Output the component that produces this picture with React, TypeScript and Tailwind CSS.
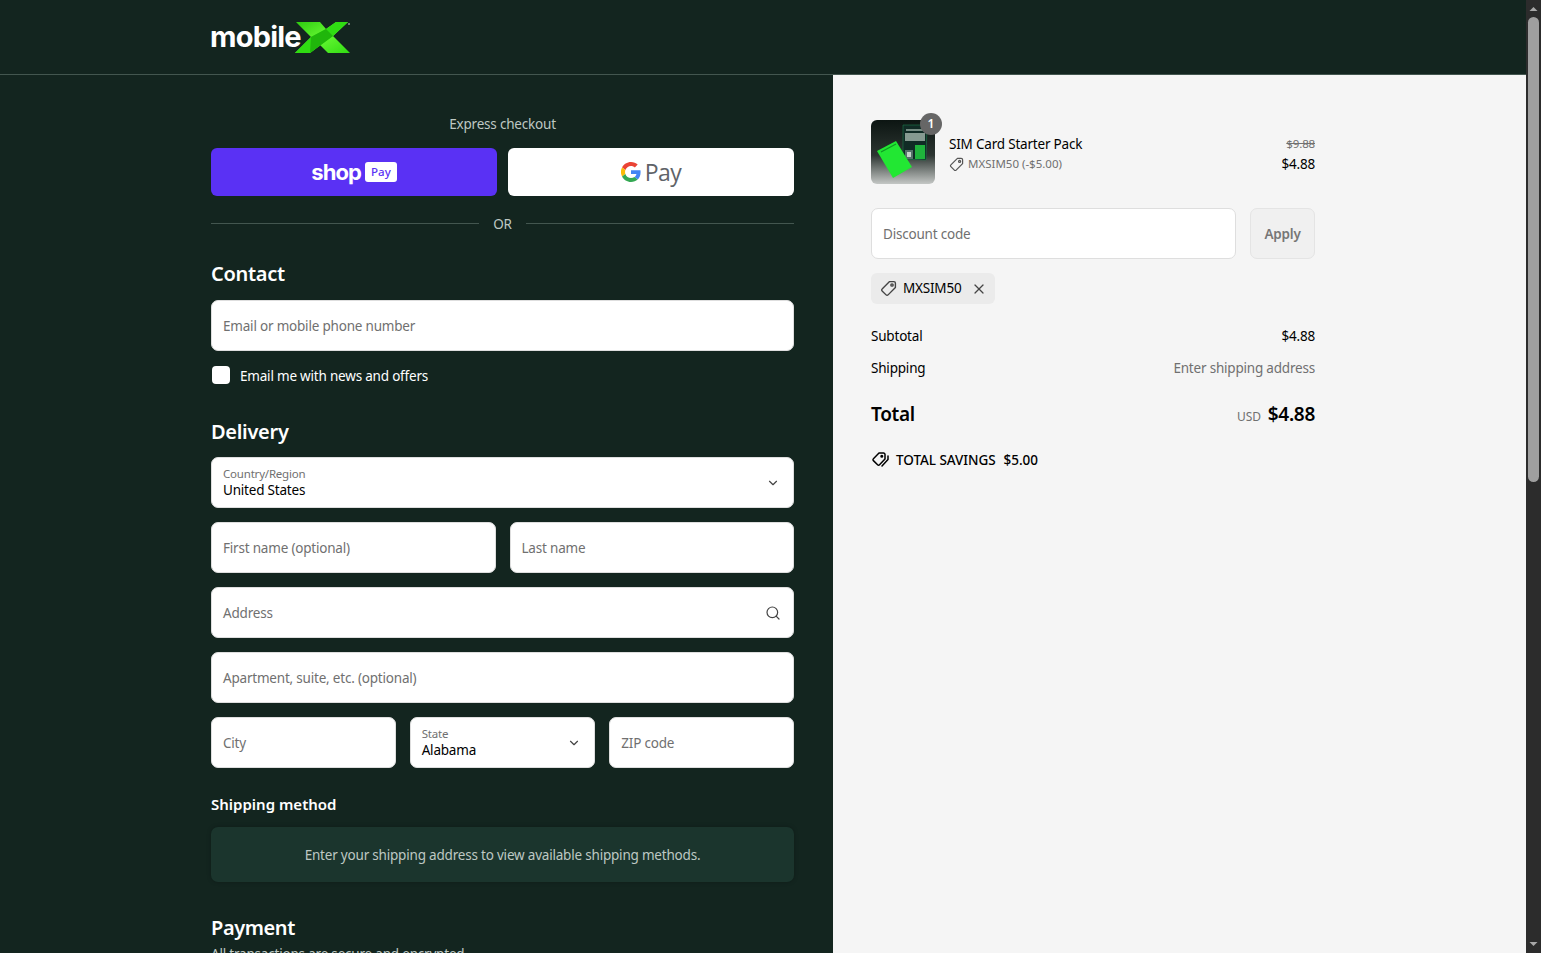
import React from 'react';
import { ChevronDown, Search, X } from 'lucide-react';

const font = "font-['Noto_Sans','Open_Sans',sans-serif]";
const body = 'text-[13.5px] tracking-[-0.2px]';

const Logo = () => (
  <div className="flex items-center h-[34px] -ml-[1px]">
    <span className="font-['Inter',sans-serif] font-bold text-[29px] leading-none tracking-[-0.8px] text-white">mobile</span>
    <svg width="57" height="33" viewBox="0 0 57 33" className="-ml-[7px] shrink-0 mt-[2px]">
      <defs>
        <linearGradient id="xg" x1="0" y1="0" x2="1" y2="1">
          <stop offset="0" stopColor="#2ccb0e" />
          <stop offset="0.5" stopColor="#66f733" />
          <stop offset="1" stopColor="#30dc12" />
        </linearGradient>
      </defs>
      <path d="M2 1h24l6 7 10-7h12L39 15l17 17H34l-8-8-10 8H1l16-16z" fill="url(#xg)" />
      <path d="M42 1h12L39 15 16 32H1l16-16 15-8z" fill="#2fdc12" />
      <path d="M17 16l15-8 7 7-23 17z" fill="#20b60b" />
      <circle cx="55" cy="3" r="1" fill="#8a9a90" />
    </svg>
  </div>
);

const Tag = ({ size = 16, className = '' }: { size?: number; className?: string }) => (
  <svg width={size} height={size} viewBox="0 0 16 16" fill="none" stroke="currentColor" strokeWidth="1.3" strokeLinejoin="round" className={className}>
    <path d="M9 1.500h4a1.500 1.500 0 0 1 1.500 1.500v4L7.600 14a1.300 1.300 0 0 1-1.900 0L2 10.300a1.300 1.300 0 0 1 0-1.900z" />
    <circle cx="11.300" cy="4.700" r="1.100" />
  </svg>
);

const Tags = () => (
  <svg width="18" height="18" viewBox="0 0 18 18" fill="none" stroke="currentColor" strokeWidth="1.500" strokeLinejoin="round" strokeLinecap="round">
    <path d="M8 2h4.500A1.500 1.500 0 0 1 14 3.500V8l-5.500 5.800a1.300 1.300 0 0 1-1.900 0L2.400 9.600a1.300 1.300 0 0 1 0-1.900z" />
    <circle cx="10.800" cy="5.300" r="0.800" />
    <path d="M17 5v3.500l-6 6.500" />
  </svg>
);

const Field = ({ label, className = '', icon }: { label: string; className?: string; icon?: React.ReactNode }) => (
  <div className={`h-[51px] bg-white rounded-[7px] border border-[#dedede] flex items-center justify-between pl-[11px] pr-[12px] min-w-0 ${className}`}>
    <span className={`${body} pt-[2px] text-[#707070] whitespace-nowrap`}>{label}</span>
    {icon}
  </div>
);

const SelectField = ({ label, value, className = '' }: { label: string; value: string; className?: string }) => (
  <div className={`h-[51px] bg-white rounded-[7px] border border-[#dedede] flex items-center justify-between pl-[11px] pr-[13px] min-w-0 ${className}`}>
    <div className="flex flex-col pb-[2px]">
      <span className="text-[11.5px] tracking-[-0.2px] leading-[16px] text-[#707070]">{label}</span>
      <span className={`${body} leading-[16px] text-black`}>{value}</span>
    </div>
    <ChevronDown size={14} strokeWidth={2} className="text-[#444]" />
  </div>
);

const Thumb = () => (
  <svg width="64" height="64" viewBox="0 0 64 64" className="rounded-[6px] block">
    <defs>
      <linearGradient id="thumbBg" x1="0" y1="0" x2="0" y2="1">
        <stop offset="0" stopColor="#0c1512" />
        <stop offset="0.55" stopColor="#2c3531" />
        <stop offset="1" stopColor="#c4c7c5" />
      </linearGradient>
    </defs>
    <rect width="64" height="64" fill="url(#thumbBg)" />
    <path d="M32 5h24l-1 35-23-1z" fill="#102b25" stroke="#1d7a4b" strokeWidth="0.6" />
    <rect x="35" y="9" width="18" height="2" fill="#9fb5aa" opacity="0.7" />
    <rect x="34" y="13" width="20" height="8" fill="#d5e4da" opacity="0.6" />
    <rect x="34" y="30" width="8" height="9" fill="#56706a" />
    <rect x="36" y="32" width="4" height="5" fill="#c5d3cb" />
    <rect x="44" y="25" width="10" height="14" fill="#1fb43c" />
    <path d="M6 31l19-10 16 26-19 11z" fill="#22e733" />
    <path d="M10 32l15-8" stroke="#0f9a22" strokeWidth="1.200" />
  </svg>
);

const App = () => {
  return (
    <div className={`h-[953px] w-full overflow-hidden flex ${font}`}>
      <div className="flex-1 min-w-0 flex flex-col">
        <header className="h-[75px] shrink-0 bg-[#13251f] border-b border-[#43564f] pl-[211px] pt-[19px]">
          <Logo />
        </header>
        <div className="flex-1 min-h-0 flex">
          <main className="w-[833px] shrink-0 bg-[#13251f] pl-[211px] pr-[39px] pt-[39px]">
            <p className={`${body} leading-[20px] text-[#bec8c3] text-center`}>Express checkout</p>
            <div className="flex gap-[11px] mt-[14px]">
              <div className="flex-1 h-[48px] rounded-[6px] bg-[#5a31f4] flex items-center justify-center gap-[4px]">
                <span className="font-['Inter',sans-serif] font-bold text-[22px] leading-none tracking-[-0.9px] text-white">shop</span>
                <span className="bg-white text-[#5a31f4] rounded-[3px] text-[11.5px] leading-none px-[6px] py-[4px] font-medium">Pay</span>
              </div>
              <div className="flex-1 h-[48px] rounded-[6px] bg-white flex items-center justify-center gap-[4px]">
                <svg width="20" height="20" viewBox="0 0 48 48">
                  <path fill="#EA4335" d="M24 9.500c3.500 0 6.700 1.200 9.200 3.600l6.900-6.900C35.900 2.400 30.500 0 24 0 14.600 0 6.500 5.400 2.600 13.200l8 6.200C12.400 13.700 17.700 9.500 24 9.500z" />
                  <path fill="#4285F4" d="M47 24.500c0-1.600-.1-3.100-.4-4.500H24v9h13c-.6 3-2.200 5.500-4.800 7.200l7.700 6C44.400 38 47 31.800 47 24.500z" />
                  <path fill="#FBBC05" d="M10.500 28.600A14.500 14.500 0 0 1 10.500 19.400l-8-6.200a24 24 0 0 0 0 21.600z" />
                  <path fill="#34A853" d="M24 48c6.500 0 11.900-2.100 15.900-5.800l-7.700-6c-2.200 1.400-4.900 2.300-8.200 2.300-6.300 0-11.600-4.200-13.500-9.900l-8 6.200C6.500 42.600 14.600 48 24 48z" />
                </svg>
                <span className="font-['Open_Sans',sans-serif] text-[23px] leading-none text-[#5f6368] tracking-[-0.6px]">Pay</span>
              </div>
            </div>
            <div className="flex items-center gap-[14px] mt-[17px] h-[20px]">
              <div className="flex-1 h-px bg-[#43564f]" />
              <span className={`${body} pt-[2px] text-[#bec8c3]`}>OR</span>
              <div className="flex-1 h-px bg-[#43564f]" />
            </div>
            <h2 className="text-[20px] leading-[28px] font-semibold text-white tracking-[-0.3px] mt-[27px]">Contact</h2>
            <Field label="Email or mobile phone number" className="mt-[12px]" />
            <label className="flex items-center gap-[10px] mt-[14px] pl-[1px] h-[20px]">
              <span className="w-[18px] h-[18px] rounded-[4px] bg-white block" />
              <span className={`${body} pt-[2px] text-white`}>Email me with news and offers</span>
            </label>
            <h2 className="text-[20px] leading-[28px] font-semibold text-white tracking-[-0.3px] mt-[33px]">Delivery</h2>
            <div className="flex flex-col gap-[14px] mt-[11px]">
              <SelectField label="Country/Region" value="United States" />
              <div className="flex gap-[14px]">
                <Field label="First name (optional)" className="flex-1" />
                <Field label="Last name" className="flex-1" />
              </div>
              <Field label="Address" icon={<Search size={16} strokeWidth={1.8} className="text-[#444]" />} />
              <Field label="Apartment, suite, etc. (optional)" />
              <div className="flex gap-[14px]">
                <Field label="City" className="flex-1" />
                <SelectField label="State" value="Alabama" className="flex-1" />
                <Field label="ZIP code" className="flex-1" />
              </div>
            </div>
            <h3 className="text-[15px] leading-[22px] font-semibold text-white mt-[25px]">Shipping method</h3>
            <div className="h-[55px] mt-[12px] rounded-[7px] bg-[#1b352d] flex items-center justify-center shadow-[0_0_4px_rgba(0,0,0,0.25)]">
              <span className={`${body} pt-[2px] text-[#bec8c3]`}>Enter your shipping address to view available shipping methods.</span>
            </div>
            <h2 className="text-[20px] leading-[28px] font-semibold text-white tracking-[-0.4px] mt-[32px]">Payment</h2>
            <p className={`${body} leading-[20px] text-[#bec8c3] mt-[2px]`}>All transactions are secure and encrypted.</p>
          </main>
          <aside className="flex-1 min-w-0 bg-[#f5f5f5] pl-[38px] pt-[45px]">
            <div className="w-[444px]">
              <div className="flex items-center">
                <div className="relative w-[64px] h-[64px] shrink-0">
                  <Thumb />
                  <span className="absolute -top-[7px] -right-[7px] w-[22px] h-[22px] rounded-full bg-[#666] text-white text-[12px] font-semibold flex items-center justify-center">1</span>
                </div>
                <div className="flex-1 ml-[14px] pt-[4px]">
                  <p className={`${body} leading-[20px] text-black`}>SIM Card Starter Pack</p>
                  <p className="flex items-center gap-[4px] text-[11.5px] leading-[20px] text-[#707070]">
                    <Tag size={15} className="text-[#555]" />
                    MXSIM50 (-$5.00)
                  </p>
                </div>
                <div className="text-right pt-[4px]">
                  <p className="text-[11.5px] tracking-[-0.15px] leading-[20px] text-[#707070] line-through">$9.88</p>
                  <p className={`${body} leading-[20px] text-black`}>$4.88</p>
                </div>
              </div>
              <div className="flex gap-[14px] mt-[24px]">
                <div className="flex-1 h-[51px] bg-white rounded-[7px] border border-[#dedede] flex items-center pl-[11px]">
                  <span className={`${body} pt-[2px] text-[#707070]`}>Discount code</span>
                </div>
                <div className="w-[65px] h-[51px] rounded-[7px] bg-[#f0f0f0] border border-[#e4e4e4] flex items-center justify-center">
                  <span className={`${body} pt-[2px] font-semibold text-[#767676]`}>Apply</span>
                </div>
              </div>
              <div className="inline-flex items-center h-[31px] mt-[14px] pl-[9px] pr-[8px] gap-[6px] rounded-[6px] bg-[#ebebeb]">
                <Tag size={17} className="text-[#444]" />
                <span className={`${body} text-black`}>MXSIM50</span>
                <X size={16} strokeWidth={1.8} className="text-[#444] ml-[4px]" />
              </div>
              <div className={`flex justify-between mt-[22px] ${body} leading-[20px] text-black`}>
                <span>Subtotal</span>
                <span>$4.88</span>
              </div>
              <div className={`flex justify-between mt-[12px] ${body} leading-[20px]`}>
                <span className="text-black">Shipping</span>
                <span className="text-[#707070]">Enter shipping address</span>
              </div>
              <div className="flex justify-between items-center mt-[22px] h-[28px]">
                <span className="text-[19px] tracking-[-0.3px] font-semibold text-black">Total</span>
                <span className="flex items-baseline gap-[7px]">
                  <span className="text-[12px] tracking-[-0.15px] text-[#707070]">USD</span>
                  <span className="text-[19px] tracking-[-0.3px] font-semibold text-black">$4.88</span>
                </span>
              </div>
              <div className="flex items-center gap-[7px] mt-[22px] h-[20px] text-[13.5px] tracking-[-0.05px] font-medium text-black">
                <Tags />
                <span>TOTAL SAVINGS</span>
                <span className="ml-[1px]">$5.00</span>
              </div>
            </div>
          </aside>
        </div>
      </div>
      <div className="w-[15px] shrink-0 bg-[#2c2c2c] flex flex-col items-center">
        <svg width="15" height="17" viewBox="0 0 15 17" className="shrink-0"><path d="M3.500 11l4-4 4 4z" fill="#a8a8a8" /></svg>
        <div className="w-[11px] h-[465px] rounded-[6px] bg-[#9f9f9f]" />
        <div className="flex-1" />
        <svg width="15" height="17" viewBox="0 0 15 17" className="shrink-0"><path d="M3.500 6l4 4 4-4z" fill="#a8a8a8" /></svg>
      </div>
    </div>
  );
};

export default App;
